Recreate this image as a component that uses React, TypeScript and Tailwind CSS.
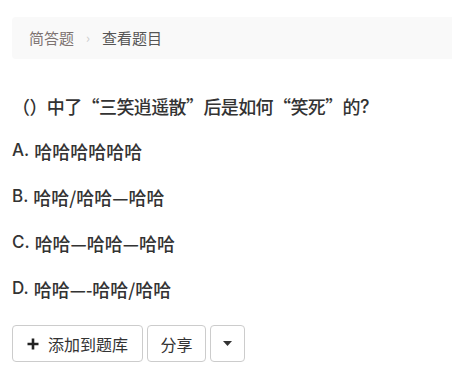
import React from "react";

export default function App() {
  const options: [string, string][] = [
    ["A.", "哈哈哈哈哈哈"],
    ["B.", "哈哈/哈哈—哈哈"],
    ["C.", "哈哈—哈哈—哈哈"],
    ["D.", "哈哈—-哈哈/哈哈"],
  ];
  return (
    <div className="w-[452px] h-[381px] bg-white overflow-hidden font-['Noto_Sans_CJK_SC','Liberation_Sans',sans-serif]">
      <div className="pt-[17px] pl-[12px]">
        <div className="h-[42px] bg-[#f9f9f9] rounded-l-[4px] flex items-center pl-[17px] text-[15px]">
          <span className="text-[#7d7371]">简答题</span>
          <span className="text-[#cccccc] px-[12px] text-[13px]">›</span>
          <span className="text-[#555555]">查看题目</span>
        </div>
      </div>
      <div className="px-[12px]">
        <div className="mt-[34px] h-[26px] flex items-center text-[18px] font-medium text-[#333333] tracking-[-0.6px]">
          （）中了“三笑逍遥散”后是如何“笑死”的
          <span className="font-['Inter',sans-serif] tracking-normal">?</span>
        </div>
        <div className="mt-[9px] flex flex-col">
          {options.map(([k, v]) => (
            <div key={k} className="h-[46px] flex items-center text-[18px] font-medium text-[#333333]">
              <span className="font-['Inter',sans-serif] text-[17px] mr-[5px]">{k}</span>
              <span>{v}</span>
            </div>
          ))}
        </div>
        <div className="mt-[13px] flex items-center gap-[4px]">
          <button className="h-[37px] w-[131px] justify-center flex items-center gap-[9px] border border-[#cccccc] rounded-[4px] bg-white text-[16px] text-[#333333]">
            <svg width="12" height="12" viewBox="0 0 12 12">
              <path d="M6 0.5v11M0.5 6h11" stroke="#222" strokeWidth="2.6" />
            </svg>
            <span>添加到题库</span>
          </button>
          <button className="h-[37px] w-[59px] flex items-center justify-center border border-[#cccccc] rounded-[4px] bg-white text-[16px] text-[#333333]">
            分享
          </button>
          <button className="h-[37px] w-[35px] flex items-center justify-center border border-[#cccccc] rounded-[4px] bg-white">
            <svg width="9" height="5" viewBox="0 0 9 5">
              <path d="M0 0h9L4.5 5z" fill="#333" />
            </svg>
          </button>
        </div>
      </div>
    </div>
  );
}
